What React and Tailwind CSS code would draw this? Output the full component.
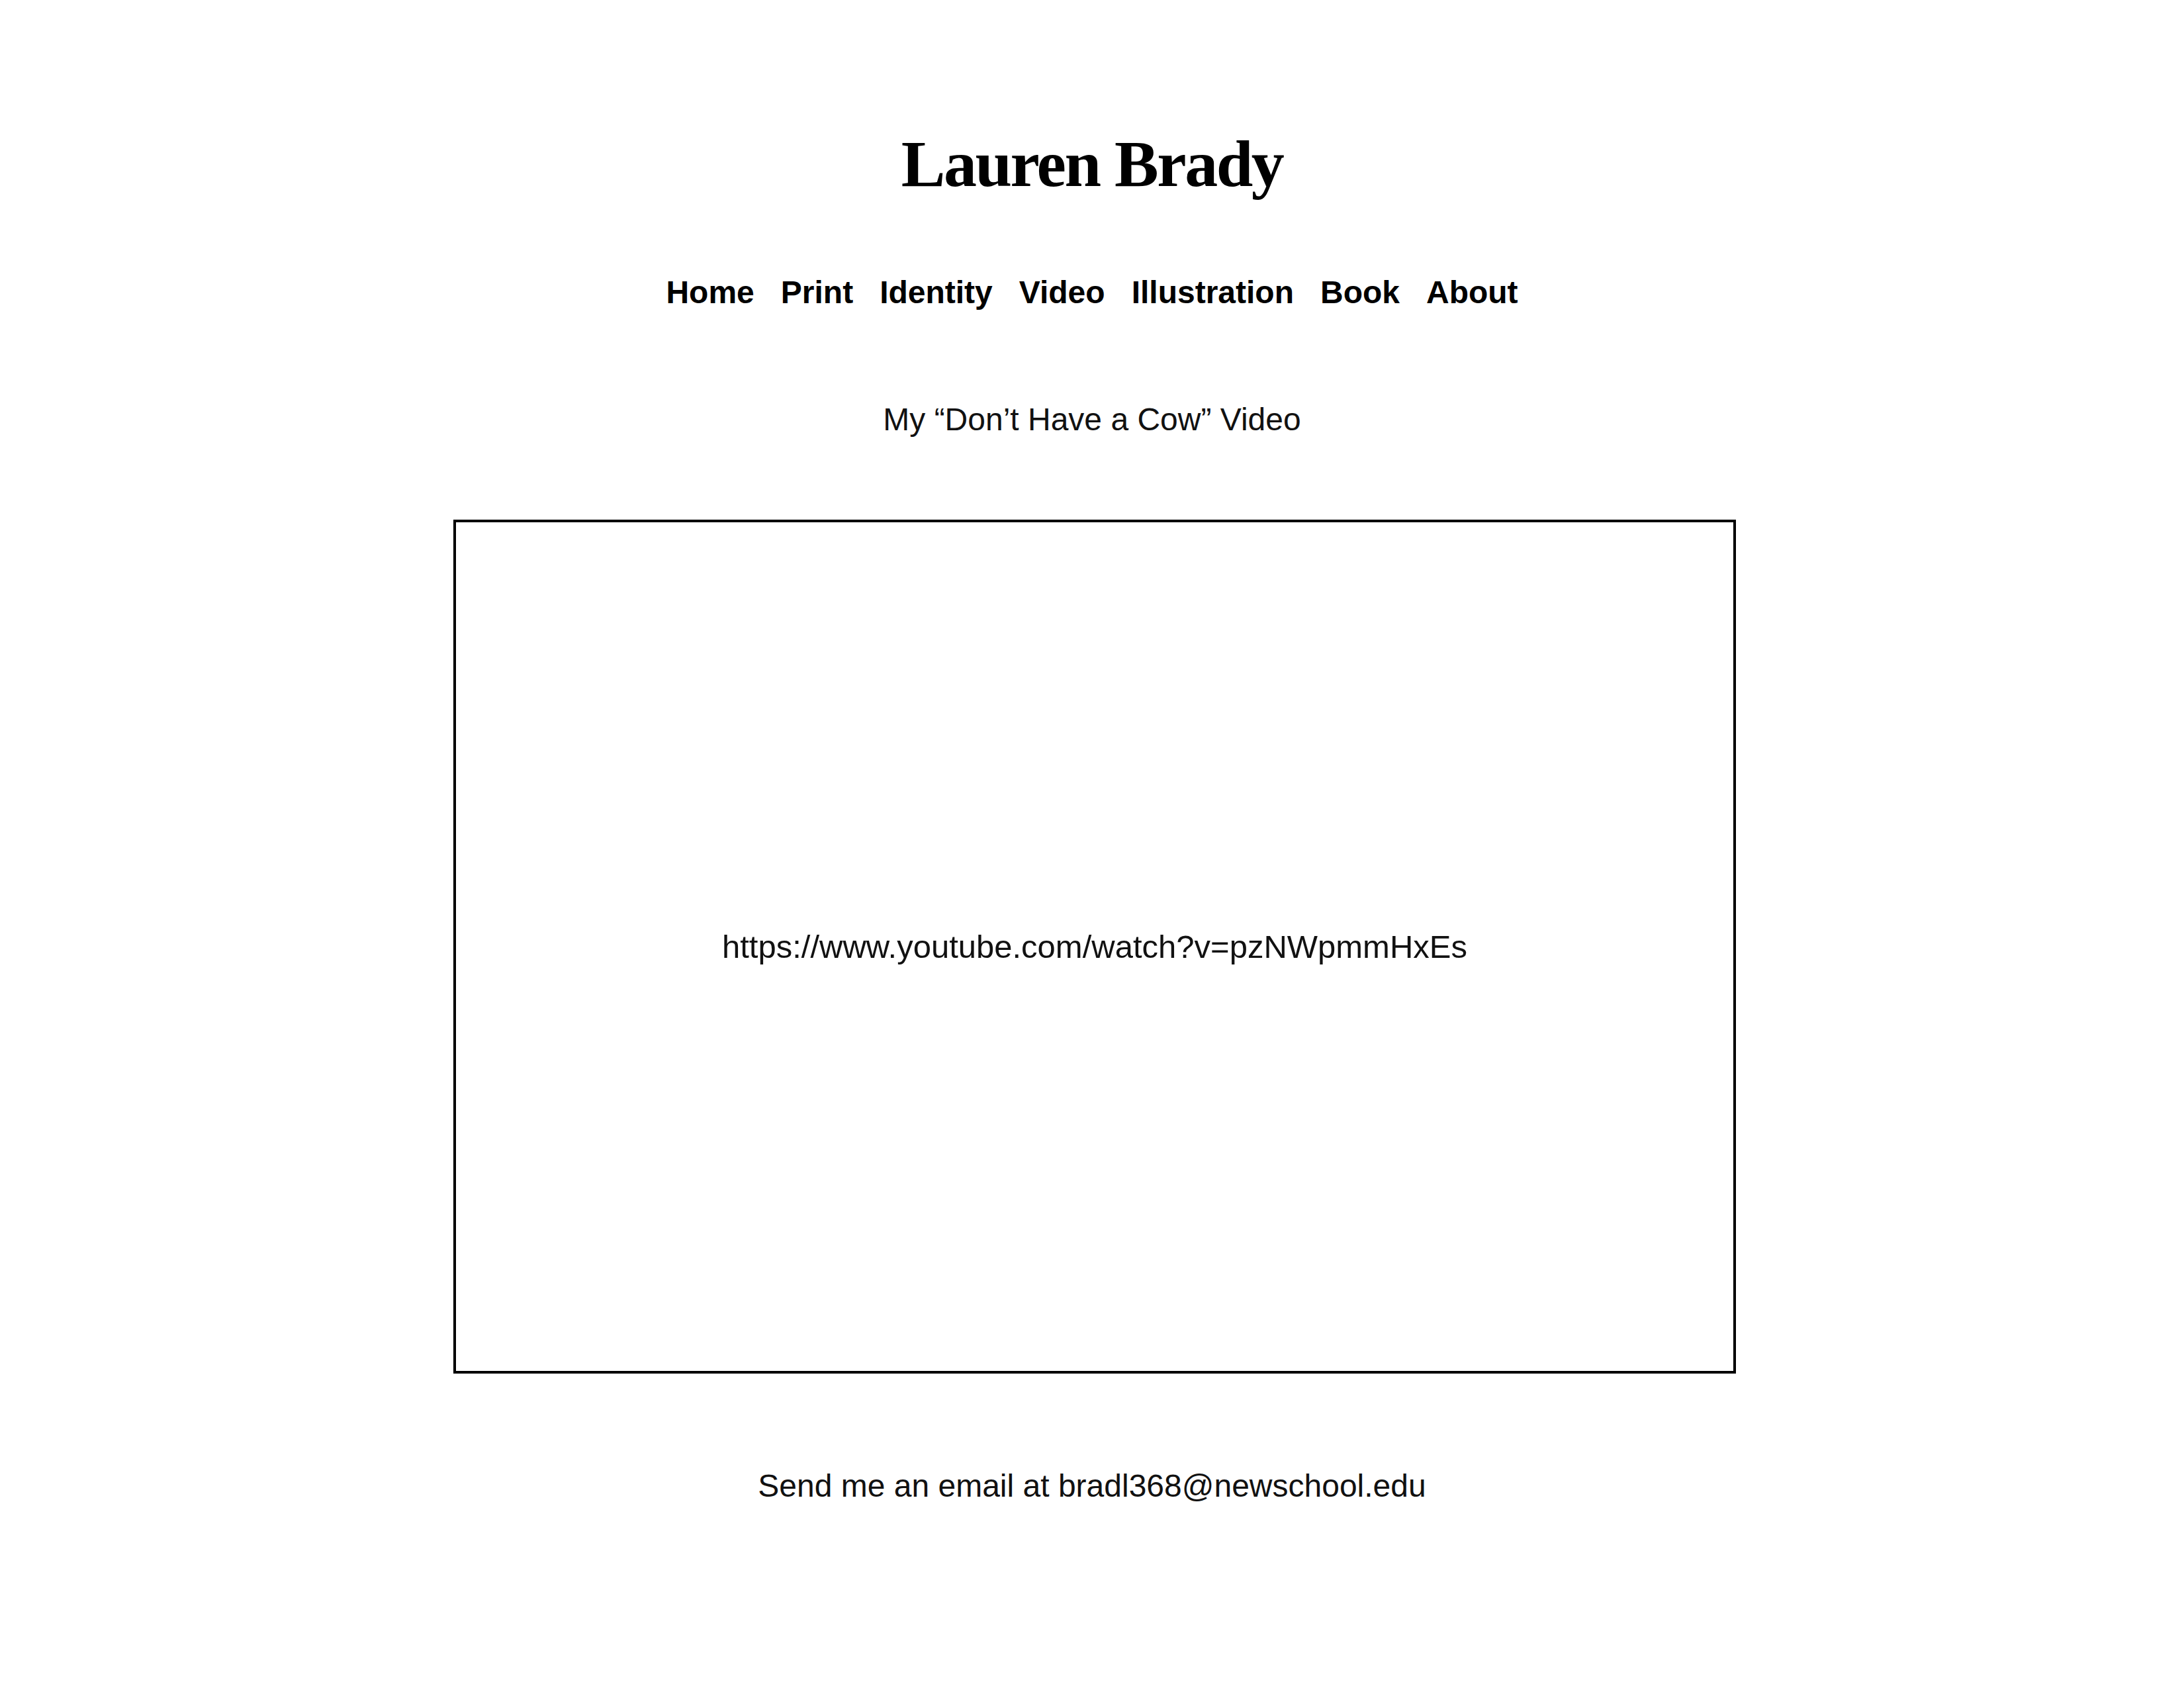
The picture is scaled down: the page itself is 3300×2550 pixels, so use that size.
export default function App() {
  const links = ["Home", "Print", "Identity", "Video", "Illustration", "Book", "About"];

  return (
    <div className="min-h-[2550px] w-full bg-white text-black flex flex-col items-center pt-[198px] font-['Liberation_Sans',Arial,sans-serif]">
      {/* Name */}
      <h1 className="text-[100px] leading-none font-bold tracking-[-0.025em] font-['Liberation_Serif','Times_New_Roman',serif]">
        Lauren Brady
      </h1>

      {/* Nav */}
      <nav className="mt-[120px] flex gap-[40px] text-[48px] leading-none font-bold">
        {links.map((l) => (
          <a key={l} href="#" className="text-black">
            {l}
          </a>
        ))}
      </nav>

      <p className="mt-[144px] text-[48px] leading-none text-[#111]">
        My “Don’t Have a Cow” Video
      </p>

      {/* Video placeholder */}
      <div className="mt-[127px] ml-[8px] w-[1938px] h-[1290px] border-[4px] border-black flex items-center justify-center">
        <span className="text-[49px] leading-none text-[#111]">
          https://www.youtube.com/watch?v=pzNWpmmHxEs
        </span>
      </div>

      <p className="mt-[146px] text-[48px] leading-none text-[#111]">
        Send me an email at bradl368@newschool.edu
      </p>
    </div>
  );
}
